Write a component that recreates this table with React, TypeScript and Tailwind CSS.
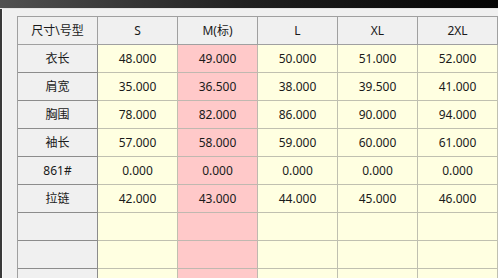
import React from "react";

const sizes = ["S", "M(标)", "L", "XL", "2XL"];

const rows = [
  { name: "衣长", values: ["48.000", "49.000", "50.000", "51.000", "52.000"] },
  { name: "肩宽", values: ["35.000", "36.500", "38.000", "39.500", "41.000"] },
  { name: "胸围", values: ["78.000", "82.000", "86.000", "90.000", "94.000"] },
  { name: "袖长", values: ["57.000", "58.000", "59.000", "60.000", "61.000"] },
  { name: "861#", values: ["0.000", "0.000", "0.000", "0.000", "0.000"] },
  { name: "拉链", values: ["42.000", "43.000", "44.000", "45.000", "46.000"] },
  { name: "", values: ["", "", "", "", ""] },
  { name: "", values: ["", "", "", "", ""] },
  { name: "", values: ["", "", "", "", ""] },
];

const font = { fontFamily: '"Noto Sans", "Noto Sans CJK SC", sans-serif' };

export default function App() {
  return (
    <div className="w-[498px] h-[278px] overflow-hidden bg-[#f0f0f0] flex flex-col" style={font}>
      <div className="h-[8px] shrink-0 bg-gradient-to-r from-[#505050] via-[#202020] to-[#050505]" />
      <div className="flex-1 min-h-0 overflow-hidden flex border-t border-[#e4e4e4]">
        <div className="w-[2px] shrink-0 bg-[#3a3a3a]" />
        <div className="flex-1 border-l border-[#fafafa] pl-[14px] pt-[7px]">
          <div className="grid grid-cols-[80px_80px_80px_80px_80px_80px] border-l border-t border-[#a0a0a0] text-[12px] text-[#1a1a1a]">
            <div className="h-[28px] flex items-center justify-center bg-[#f0f0f0] border-r border-b border-[#a0a0a0]">
              尺寸\号型
            </div>
            {sizes.map((s) => (
              <div
                key={s}
                className="h-[28px] flex items-center justify-center bg-[#f0f0f0] border-r border-b border-[#a0a0a0]"
              >
                {s}
              </div>
            ))}
            {rows.map((r, i) => (
              <React.Fragment key={i}>
                <div className="h-[28px] flex items-center justify-center bg-[#f0f0f0] border-r border-b border-[#8c8c8c]">
                  {r.name}
                </div>
                {r.values.map((v, j) => (
                  <div
                    key={j}
                    className={
                      j === 1
                        ? "h-[28px] flex items-center justify-center bg-[#ffc9c9] border-r border-b border-[#c0b8b0]"
                        : "h-[28px] flex items-center justify-center bg-[#ffffe1] border-r border-b border-[#c0c0b0]"
                    }
                  >
                    {v}
                  </div>
                ))}
              </React.Fragment>
            ))}
          </div>
        </div>
      </div>
    </div>
  );
}
